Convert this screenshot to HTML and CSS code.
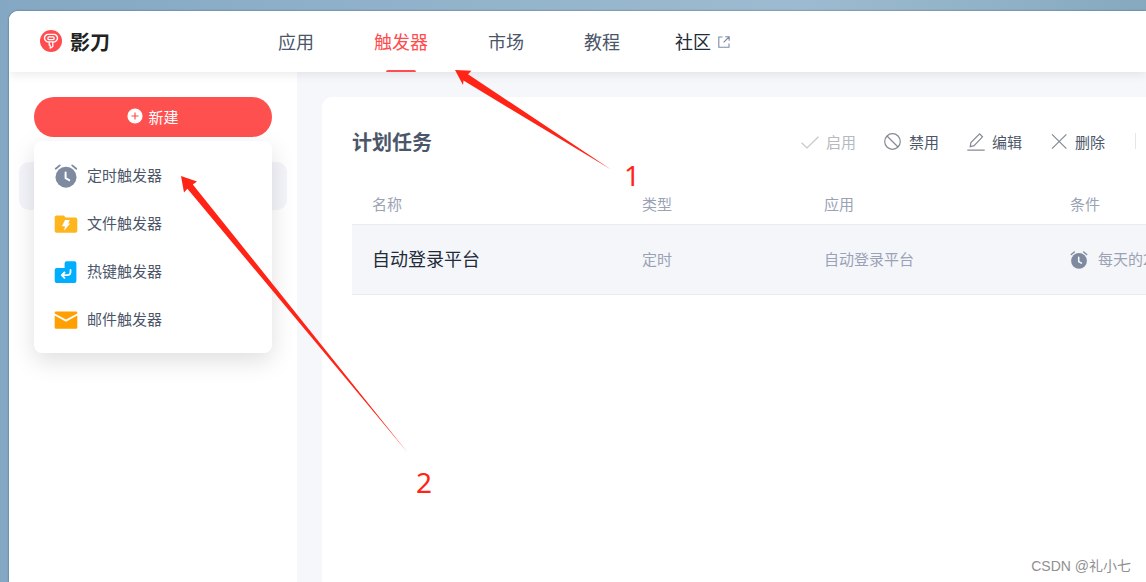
FILE: index.html
```
<!DOCTYPE html>
<html lang="zh-CN">
<head>
    <meta charset="UTF-8">
    <meta name="viewport" content="width=device-width, initial-scale=1.0">
    <title>影刀 - 触发器</title>
    <link rel="stylesheet" href="styles.css">
</head>
<body>
    <svg class="symbols" width="0" height="0">
        <symbol id="alarm" viewBox="0 0 24 24">
            <path d="M1.7 4.8 5.8 1.4M22.3 4.8 18.2 1.4" stroke="#7d8aa0" stroke-width="1.8" stroke-linecap="round"/>
            <circle cx="12" cy="13.2" r="10.5" fill="#7d8aa0"/>
            <path d="M11.6 8.4v5.8l3.6 2" fill="none" stroke="#fff" stroke-width="2" stroke-linecap="round" stroke-linejoin="round"/>
        </symbol>
    </svg>

    <div class="window">
        <header class="header">
            <div class="logo">
                <svg width="22" height="22" viewBox="0 0 22 22">
                    <circle cx="11" cy="11" r="11" fill="#ff4d4f"/>
                    <g fill="none" stroke="#fff" stroke-width="1.3" stroke-linejoin="round">
                        <path d="M7.3 4.4h7.4Q17.5 5.4 17.5 8q0 2.6-2.7 3.8H7.2Q4.5 10.600 4.500 8q0-2.600 2.800-3.600z"/>
                        <rect x="7.900" y="6.800" width="6.200" height="2.800" rx="1.200"/>
                        <path d="M9.200 12v3.100h1v3.100l2.600-1.700V12"/>
                    </g>
                </svg>
                <span>影刀</span>
            </div>
            <nav class="nav">
                <a>应用</a>
                <a class="active">触发器</a>
                <a>市场</a>
                <a>教程</a>
                <a class="community">社区
                    <svg width="12" height="12" viewBox="0 0 12 12" fill="none" stroke="#7d8aa3" stroke-width="1.1">
                        <path d="M4.6 1H.8v10.2H11V7.4M7.2.8H11.2V4.8M11 1 5.6 6.4"/>
                    </svg>
                </a>
            </nav>
        </header>

        <div class="body">
            <aside class="sidebar">
                <button class="new-btn">
                    <svg width="16" height="16" viewBox="0 0 16 16">
                        <circle cx="8" cy="8" r="7.6" fill="#fff"/>
                        <path d="M8 4.4v7.2M4.4 8h7.2" stroke="#ff4d4f" stroke-width="1.2"/>
                    </svg>
                    新建
                </button>
                <div class="selected-item"></div>

                <ul class="menu">
                    <li>
                        <svg width="24" height="24"><use href="#alarm"/></svg>
                        定时触发器
                    </li>
                    <li>
                        <svg width="24" height="24" viewBox="0 0 24 24">
                            <path d="M2.5 3.4h7.2l2 2.2h9.8q1.8 0 1.8 1.8v11.5q0 1.8-1.8 1.8h-19Q.7 20.7.7 18.9V5.2Q.7 3.4 2.5 3.4z" fill="#ffb61e"/>
                            <path d="M11 8h4.7l-1.5 3.6h2L10 18.8l1-4.6H7.9z" fill="#fff"/>
                        </svg>
                        文件触发器
                    </li>
                    <li>
                        <svg width="24" height="24" viewBox="0 0 24 24">
                            <path d="M12.6 1.2h7.8q2 0 2 2v17.7q0 2-2 2H2.7q-2 0-2-2v-11q0-2 2-2h7.900V3.200q0-2 2-2z" fill="#00aeff"/>
                            <path d="M16.500 10v1.700q0 3.500-3.500 3.500H8.500M10.500 12.500 7.800 15.200 10.500 17.900" fill="none" stroke="#fff" stroke-width="1.800" stroke-linejoin="round" stroke-linecap="round"/>
                        </svg>
                        热键触发器
                    </li>
                    <li>
                        <svg width="24" height="24" viewBox="0 0 24 24">
                            <path d="M2 3.4h20q1.3 0 1.3 1.3v.8L12 11.6.7 5.5v-.8Q.7 3.4 2 3.4z" fill="#ff9f00"/>
                            <path d="M.7 7.4 12 13.8l11.3-6.4v12q0 1.3-1.3 1.3H2Q.7 20.7.7 19.4z" fill="#ff9f00"/>
                        </svg>
                        邮件触发器
                    </li>
                </ul>
            </aside>

            <main class="card">
                <div class="card-head">
                    <h1>计划任务</h1>
                    <div class="toolbar">
                        <span class="tool disabled">
                            <svg width="18" height="18" viewBox="0 0 18 18"><path d="M.5 9.8 6 15 17.5 3.8"/></svg>
                            启用
                        </span>
                        <span class="tool">
                            <svg width="18" height="18" viewBox="0 0 18 18"><circle cx="8.5" cy="8.5" r="7.8"/><path d="M3 3l11 11"/></svg>
                            禁用
                        </span>
                        <span class="tool">
                            <svg width="18" height="18" viewBox="0 0 18 18"><path d="M.3 17.2h17.4M3.2 13.6l.7-4L12.6 .9l2.9 2.9-8.4 8.800z"/></svg>
                            编辑
                        </span>
                        <span class="tool">
                            <svg width="18" height="18" viewBox="0 0 18 18"><path d="M2 1.3l14.4 14.4M16.4 1.3 2 15.7"/></svg>
                            删除
                        </span>
                        <span class="divider"></span>
                    </div>
                </div>

                <table class="task-table">
                    <thead>
                        <tr>
                            <th class="col-name">名称</th>
                            <th class="col-type">类型</th>
                            <th class="col-app">应用</th>
                            <th>条件</th>
                        </tr>
                    </thead>
                    <tbody>
                        <tr>
                            <td class="task-name">自动登录平台</td>
                            <td>定时</td>
                            <td>自动登录平台</td>
                            <td>
                                <div class="condition">
                                    <svg width="18" height="18"><use href="#alarm"/></svg>
                                    每天的2
                                </div>
                            </td>
                        </tr>
                    </tbody>
                </table>
            </main>
        </div>
    </div>

    <!-- step arrows over the window -->
    <svg class="arrows" width="1146" height="582" viewBox="0 0 1146 582" fill="#ff2416">
        <path d="M455 70 471.5 70.8 468 74.2 611 169.500 463.5 80.6 463 85z"/>
        <path d="M181 176 197 181.5 192.8 184.4 408 453 187.4 188.8 184 192.5z"/>
    </svg>
    <span class="step step-one">1</span>
    <span class="step step-two">2</span>
    <span class="watermark">CSDN @礼小七</span>
</body>
</html>
```
FILE: styles.css
```
* {
    box-sizing: border-box;
}

body {
    margin: 0;
    height: 582px;
    padding: 11px 0 0 9px;
    overflow: hidden;
    position: relative;
    font-family: "Noto Sans CJK SC", sans-serif;
    font-size: 15px;
    font-weight: 400;
    color: #4b5669;
    background: linear-gradient(90deg, #84a8c3, #9dbbd0 70%, #86a9c0);
}

svg {
    flex-shrink: 0;
}

.symbols {
    position: absolute;
}

.window {
    height: 571px;
    display: flex;
    flex-direction: column;
    border-top-left-radius: 9px;
    overflow: hidden;
    background: #fff;
    box-shadow: 0 0 2px rgba(30, 50, 70, 0.7);
}

.header {
    height: 61px;
    flex-shrink: 0;
    display: flex;
    position: relative;
    z-index: 1;
    padding-left: 31px;
    background: #fff;
    box-shadow: 0 2px 10px rgba(0, 0, 0, 0.09);
}

.logo {
    width: 238px;
    display: flex;
    align-items: center;
    gap: 8px;
    padding-bottom: 2px;
    font-size: 20px;
    font-weight: bold;
    color: #222;
}

.logo span {
    margin-top: 2px;
}

.nav {
    display: flex;
    gap: 60px;
    font-size: 18px;
}

.nav a {
    display: flex;
    align-items: center;
    position: relative;
    padding-bottom: 2px;
}

.nav .active {
    color: #ff4d4f;
}

.nav .active::after {
    content: "";
    position: absolute;
    left: 12px;
    bottom: 0;
    width: 30px;
    height: 2px;
    border-radius: 2px 2px 0 0;
    background: #ff4d4f;
}

.nav .community {
    margin-left: -5px;
    gap: 7px;
    color: #222b38;
}

.community svg {
    margin-top: 2px;
}

.body {
    flex: 1;
    display: flex;
    background: #f6f7fb;
}

.sidebar {
    width: 288px;
    flex-shrink: 0;
    position: relative;
    padding: 25px 10px;
    background: #fff;
}

.new-btn {
    width: 238px;
    height: 40px;
    margin-left: 15px;
    padding: 0 0 2px;
    display: flex;
    align-items: center;
    justify-content: center;
    gap: 5px;
    border: none;
    border-radius: 20px;
    background: #ff5050;
    color: #fff;
    font: inherit;
}

.selected-item {
    height: 48px;
    margin-top: 25px;
    border-radius: 10px;
    background: #f4f5fa;
}

.menu {
    position: absolute;
    top: 69px;
    left: 25px;
    width: 238px;
    height: 212px;
    margin: 0;
    padding: 9px 20px;
    list-style: none;
    border-radius: 8px;
    background: #fff;
    box-shadow: 0 8px 24px rgba(0, 0, 0, 0.13);
}

.menu li {
    height: 48px;
    display: flex;
    align-items: center;
    gap: 9px;
}

.menu svg {
    margin-top: 3px;
}

.card {
    flex: 1;
    min-width: 0;
    margin: 25px 0 0 25px;
    padding: 24px 0 0 30px;
    border-top-left-radius: 10px;
    overflow: hidden;
    background: #fff;
}

.card-head {
    height: 40px;
    display: flex;
    align-items: center;
}

h1 {
    width: 449px;
    margin: 0;
    font-size: 20px;
    font-weight: bold;
}

.toolbar {
    display: flex;
    align-items: center;
    gap: 28px;
}

.tool {
    display: flex;
    align-items: center;
    gap: 7px;
    white-space: nowrap;
}

.tool svg {
    margin-top: 1px;
    fill: none;
    stroke: #858b94;
    stroke-width: 1.2;
}

.tool.disabled {
    color: #b5b9c0;
}

.tool.disabled svg {
    stroke: #c6c8cc;
}

.divider {
    width: 1px;
    height: 16px;
    margin-left: 2px;
    background: #e4e6ea;
}

.task-table {
    width: 900px;
    margin-top: 23px;
    table-layout: fixed;
    border-collapse: collapse;
    color: #9aa2b5;
}

.task-table th {
    height: 40px;
    padding: 0 0 0 20px;
    font-weight: 400;
    text-align: left;
}

.task-table td {
    height: 70px;
    padding: 0 0 2px 20px;
    border-top: 1px solid #e9ebf1;
    border-bottom: 1px solid #e9ebf1;
    background: #f5f6fa;
}

.col-name {
    width: 270px;
}

.col-type {
    width: 182px;
}

.col-app {
    width: 246px;
}

.task-table .task-name {
    font-size: 18px;
    color: #222b38;
}

.condition {
    display: flex;
    align-items: center;
    gap: 10px;
    white-space: nowrap;
}

.condition svg {
    margin-top: 3px;
}

.arrows {
    position: absolute;
    top: 0;
    left: 0;
    z-index: 2;
}

.step {
    position: absolute;
    z-index: 2;
    font-family: "Noto Sans", sans-serif;
    font-size: 28px;
    font-weight: 400;
    line-height: 30px;
    color: #ff2416;
}

.step-one {
    left: 624px;
    top: 160px;
}

.step-two {
    left: 416px;
    top: 467px;
}

.watermark {
    position: absolute;
    right: 15px;
    bottom: 7px;
    font-family: "Liberation Sans", "Noto Sans CJK SC", sans-serif;
    font-size: 14px;
    color: #909090;
}
```
